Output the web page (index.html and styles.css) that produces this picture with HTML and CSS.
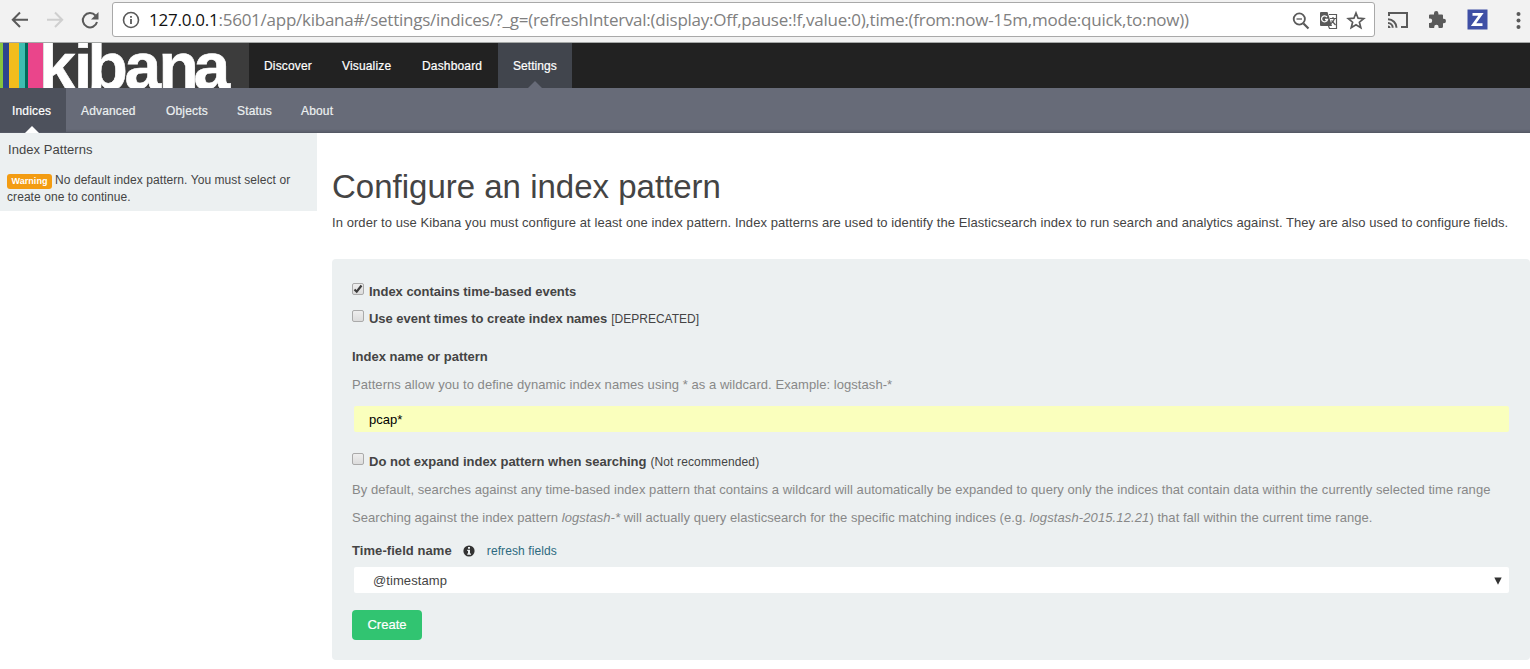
FILE: index.html
```html
<!DOCTYPE html>
<html lang="en">
<head>
<meta charset="utf-8">
<title>Kibana - Settings</title>
<link rel="stylesheet" href="styles.css">
</head>
<body>
<div class="browser">
  <svg class="nav-icons" width="112" height="42" viewBox="0 0 112 42" fill="none" stroke="#5a5a5a" stroke-width="2">
    <path d="M28 19.700H13M20 12.500L12.800 19.700L20 27"/>
    <path stroke="#cfcfcf" d="M47 19.700H62M55 12.500L62.200 19.700L55 27"/>
    <path d="M95.500 15.500A7.200 7.200 0 1 0 97 22"/>
    <path fill="#5a5a5a" stroke="none" d="M98.500 12V19.500H91Z"/>
  </svg>
  <div class="address">
    <svg class="info" width="20" height="20" viewBox="0 0 20 20"><circle cx="10" cy="10" r="7.500" fill="none" stroke="#5a5a5a" stroke-width="1.600"/><path stroke="#5a5a5a" stroke-width="1.800" d="M10 9V14M10 6V7.800"/></svg>
    <span class="url"><b>127.0.0.1</b>:5601/app/kibana#/settings/indices/?_g=(refreshInterval:(display:Off,pause:!f,value:0),time:(from:now-15m,mode:quick,to:now))</span>
    <svg class="address-icons" width="82" height="32" viewBox="0 0 82 32" fill="none" stroke="#5a5a5a">
      <circle cx="8.300" cy="15" r="5.600" stroke-width="1.800"/><path stroke-width="2.200" d="M12.500 19.500L17.500 24.500"/><path stroke-width="1.300" d="M5.500 15H11"/>
      <path fill="#5a5a5a" stroke="none" d="M30 8H36.500L41 22H30Q29 22 29 21V9Q29 8 30 8Z"/>
      <path stroke-width="1.200" d="M38 10.500H45.500V24.500H38.500L37.500 22M39 14.500H45M42 13V14.500M43.500 14.500Q42.500 18.500 39.500 20M40.500 16.500L44.500 21"/>
      <path stroke="#fff" stroke-width="1.300" d="M36 13A3 3 0 1 0 36.500 15.500H34"/>
      <path stroke-width="1.700" stroke-linejoin="miter" d="M65 9L67.100 14.200L72.700 14.600L68.400 18.200L69.800 23.700L65 20.700L60.200 23.700L61.600 18.200L57.300 14.600L62.900 14.200Z"/>
    </svg>
  </div>
  <svg class="extensions" width="155" height="42" viewBox="1375 0 155 42">
    <path fill="none" stroke="#5a5a5a" stroke-width="2" d="M1389 16V13H1407V27H1401M1388 19.200A8.500 8.500 0 0 1 1396.500 27.700M1388 23A4.700 4.700 0 0 1 1392.700 27.700"/>
    <path fill="#5a5a5a" d="M1388 25.500A2.500 2.500 0 0 1 1390.500 28H1388Z"/>
    <path fill="#5a5a5a" d="M1430 14.500H1434V13.200A2.200 2.200 0 0 1 1438.400 13.200V14.500H1442Q1443 14.500 1443 15.500V18.800H1443.800A2.200 2.200 0 0 1 1443.800 23.200H1443V26.500Q1443 28 1441.500 28H1438.600V27A2.200 2.200 0 0 0 1434.200 27V28H1430Q1429 28 1429 27V23H1430A2.200 2.200 0 0 0 1430 18.600H1429V15.500Q1429 14.500 1430 14.500Z"/>
    <path fill="#3f4fa5" d="M1467.500 9.500H1487.500V29.500H1467.500Z"/><path fill="none" stroke="#fff" stroke-width="2.700" d="M1472.500 14.300H1481L1473.500 24.700H1482.500"/>
    <g fill="#5a5a5a"><circle cx="1518.500" cy="14" r="2"/><circle cx="1518.500" cy="20.500" r="2"/><circle cx="1518.500" cy="27" r="2"/></g>
  </svg>
</div>
<nav class="topnav">
  <svg class="logo" width="249" height="45" viewBox="0 0 249 45">
    <path fill="#3c3c3c" d="M0 0H249V45H0Z"/>
    <path fill="#86c440" d="M0 0H3V45H0Z"/><path fill="#2d458f" d="M3 0H9V45H3Z"/><path fill="#f2bd1d" d="M9 0H19V45H9Z"/><path fill="#3dbdb1" d="M19 0H25V45H19Z"/><path fill="#006b5a" d="M25 0H28V45H25Z"/><path fill="#ea458b" d="M28 0H43V45H28Z"/>
    <text class="wordmark" y="45.500" x="39 74 87.500 124.500 158.500 193.500">kibana</text>
  </svg>
  <a>Discover</a><a>Visualize</a><a>Dashboard</a><a class="active">Settings</a>
</nav>
<nav class="subnav"><a class="active">Indices</a><a>Advanced</a><a>Objects</a><a>Status</a><a>About</a></nav>
<div class="page">
  <aside class="sidebar">
    <div class="side-title">Index Patterns</div>
    <div class="notice"><span class="label">Warning</span><span class="n1">No default index pattern. You must select or</span><br><span class="n2">create one to continue.</span></div>
  </aside>
  <main class="content">
    <h1><span class="h">Configure an index pattern</span></h1>
    <p class="intro">In order to use Kibana you must configure at least one index pattern. Index patterns are used to identify the Elasticsearch index to run search and analytics against. They are also used to configure fields.</p>
    <form class="well">
      <label class="check r1"><i class="box"><svg width="10" height="10" viewBox="0 0 10 10"><path fill="none" stroke="#3c3c3c" stroke-width="2.200" d="M1.500 5.500L3.700 7.700L8.500 1.500"/></svg></i><b class="b1">Index contains time-based events</b></label>
      <label class="check r2"><i class="box"></i><b class="b2">Use event times to create index names</b><small class="s1">[DEPRECATED]</small></label>
      <div class="row name"><b class="b3">Index name or pattern</b></div>
      <div class="row help h1x"><span>Patterns allow you to define dynamic index names using * as a wildcard. Example: logstash-*</span></div>
      <div class="field filled">pcap*</div>
      <label class="check r3"><i class="box"></i><b class="b4">Do not expand index pattern when searching</b><small class="s2">(Not recommended)</small></label>
      <div class="row help h2x">By default, searches against any time-based index pattern that contains a wildcard will automatically be expanded to query only the indices that contain data within the currently selected time range</div>
      <div class="row help h3x">Searching against the index pattern <em>logstash-*</em> will actually query elasticsearch for the specific matching indices (e.g. <em class="dated">logstash-2015.12.21</em>) that fall within the current time range.</div>
      <div class="row time"><b class="b5">Time-field name</b><svg width="12" height="12" viewBox="0 0 12 12"><circle cx="6" cy="6" r="5.600" fill="#333"/><path fill="#ecf0f1" d="M5 2H7V3.700H5ZM4.200 4.800H7V8.500H8V9.700H4.200V8.500H5V6H4.200Z"/></svg><a>refresh fields</a></div>
      <div class="field select"><span>@timestamp</span><svg width="8" height="8" viewBox="0 0 8 8"><path fill="#333" d="M.3 .5H7.700L4 7.800Z"/></svg></div>
      <button type="button" class="create">Create</button>
    </form>
  </main>
</div>
</body>
</html>
```
FILE: styles.css
```css
* { box-sizing: border-box; }
body { margin: 0; width: 1530px; height: 669px; overflow: hidden; background: #fff; font: 13px/18px "Liberation Sans", Arial, sans-serif; color: #444; }
svg { display: block; flex: none; }
a, span, b, small { white-space: nowrap; }
.browser { display: flex; height: 43px; background: #f2f2f2; border-bottom: 1px solid #a5a8a7; }
.address { display: flex; align-items: center; width: 1263px; height: 35px; margin-top: 2px; padding-left: 8px; border: 1px solid #a9a9a9; border-radius: 3px; background: #fff; }
.url { width: 1142px; margin-left: 8px; font: 17px/24px "Open Sans", sans-serif; color: #808080; letter-spacing: -.25px; }
.url b { font-weight: 400; color: #111; }
.topnav { display: flex; height: 45px; background: #222; }
.wordmark { font: bold 66px "Liberation Sans", Arial, sans-serif; fill: #fff; stroke: #fff; stroke-width: .6px; }
.topnav a, .subnav a { position: relative; padding: 1px 15px 0; line-height: 45px; font-size: 12px; color: #fff; letter-spacing: .16px; -webkit-text-stroke: .2px; }
.topnav a { width: 78px; }
.topnav a:nth-of-type(2) { width: 80px; }
.topnav a:nth-of-type(3) { width: 91px; }
.topnav a.active { width: 74px; letter-spacing: .05px; background: #41454d; }
.subnav { display: flex; height: 45px; background: linear-gradient(#676b78 0 41px, #5b5f6c 44px); border-bottom: 1px solid #555965; }
.subnav a { width: 85px; color: #ecf0f1; }
.subnav a:nth-child(3) { width: 71px; }
.subnav a:nth-child(4) { width: 64px; }
.subnav a.active { width: 66px; padding-left: 12px; background: #4d515c; color: #fff; }
.topnav .active::after, .subnav .active::after { content: ""; position: absolute; bottom: 0; left: 50%; margin-left: -7px; border: solid transparent; border-width: 0 7px 7px; border-bottom-color: #676b78; }
.subnav .active::after { bottom: -1px; margin-left: -8px; border-bottom-color: #fff; }
.page { display: flex; align-items: flex-start; }
.sidebar { width: 317px; height: 78px; background: #ecf0f1; padding: 8px 7px; }
.side-title { padding-left: 1px; letter-spacing: .05px; }
.notice { margin-top: 13px; font-size: 12px; line-height: 17px; letter-spacing: .07px; }
.label { display: inline-block; height: 15px; width: 45px; margin: -3px 3px -3px 0; border-radius: 3px; background: #f39c12; color: #fff; font-size: 9px; font-weight: bold; line-height: 15px; text-align: center; vertical-align: 0; }
.content { width: 1213px; padding-left: 15px; }
h1 { margin: 33px 0 0; height: 42px; font-size: 33px; line-height: 42px; font-weight: 400; }
.intro { margin: 6px 0 0; height: 18px; white-space: nowrap; letter-spacing: .067px; }
.well { height: 401px; margin-top: 27px; padding: 24px 20px 0; background: #ecf0f1; border-radius: 4px; }
.check, .row { display: flex; height: 18px; white-space: nowrap; }
.check b { margin-left: 5px; letter-spacing: -.025px; }
.check .b4 { letter-spacing: 0; }
.check small { margin-left: 4px; font-size: 12px; }
.s2 { letter-spacing: .13px; }
.box { width: 12px; height: 12px; border: 1px solid #aaa; border-radius: 2px; background: linear-gradient(#eee, #dcdcdc); }
.r2 { margin-top: 9px; }
.name { margin-top: 20px; }
.help { color: #888; white-space: pre; letter-spacing: .06px; }
.h1x, .h2x, .h3x { margin-top: 10px; }
.h3x { letter-spacing: .045px; }
.dated { letter-spacing: .11px; }
.field { display: flex; align-items: center; justify-content: space-between; height: 26px; margin: 12px 1px 0 2px; padding: 1px 8px 0 15px; border-radius: 2px; background: #fff; }
.filled { background: #faffbd; color: #000; }
.r3 { margin-top: 21px; }
.time { margin-top: 15px; align-items: center; }
.b5 { letter-spacing: .07px; }
.time svg { margin-left: 11px; }
.time a { margin-left: 12px; font-size: 12px; color: #2d6a80; letter-spacing: .1px; }
.select { margin-top: 7px; padding: 1px 7px 0 19px; letter-spacing: .08px; }
.create { display: block; width: 70px; height: 30px; margin-top: 17px; padding: 0 0 2px; border: 0; border-radius: 4px; background: #31c471; color: #fff; font: 13px "Liberation Sans", Arial, sans-serif; -webkit-text-stroke: .2px; }
```
